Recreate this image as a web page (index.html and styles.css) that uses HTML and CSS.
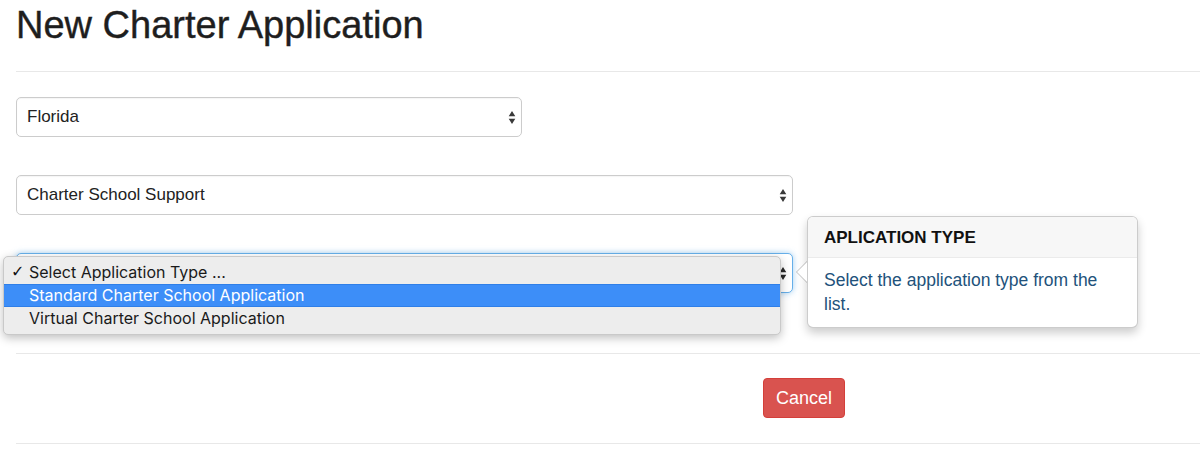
FILE: index.html
```html
<!DOCTYPE html>
<html>
<head>
<meta charset="utf-8">
<link rel="stylesheet" href="styles.css">
</head>
<body>
<div class="page">
  <h1 class="title">New Charter Application</h1>
  <hr class="rule rule-top">
  <div class="form">
    <div class="select select-narrow">
      <span class="select-text">Florida</span>
      <svg class="caret" width="8" height="15" viewBox="0 0 8 15"><path d="M4 1 L7.3 6.3 L0.7 6.3 Z M0.7 8.7 L7.3 8.7 L4 14 Z" fill="#3a3a3a"/></svg>
    </div>
    <div class="select select-wide">
      <span class="select-text">Charter School Support</span>
      <svg class="caret" width="8" height="15" viewBox="0 0 8 15"><path d="M4 1 L7.3 6.3 L0.7 6.3 Z M0.7 8.7 L7.3 8.7 L4 14 Z" fill="#3a3a3a"/></svg>
    </div>
    <div class="field-active">
      <div class="select select-wide select-focus">
        <span class="select-text"></span>
        <svg class="caret" width="8" height="15" viewBox="0 0 8 15"><path d="M4 1 L7.3 6.3 L0.7 6.3 Z M0.7 8.7 L7.3 8.7 L4 14 Z" fill="#2a2a2a"/></svg>
      </div>
      <ul class="menu">
        <li class="menu-item"><span class="check">✓</span>Select Application Type ...</li>
        <li class="menu-item menu-item-hl">Standard Charter School Application</li>
        <li class="menu-item">Virtual Charter School Application</li>
      </ul>
      <div class="popover">
        <div class="popover-arrow"></div>
        <div class="popover-title">APLICATION TYPE</div>
        <div class="popover-body">Select the application type from the list.</div>
      </div>
    </div>
  </div>
  <hr class="rule rule-mid">
  <div class="actions">
    <button class="btn-cancel">Cancel</button>
  </div>
  <hr class="rule rule-bottom">
</div>
</body>
</html>
```

FILE: styles.css
```css
* { box-sizing: border-box; }
html, body { margin: 0; padding: 0; background: #fff; }
body {
  font-family: "Liberation Sans", Arial, sans-serif;
  color: #333;
  font-size: 16px;
}
.page {
  padding: 5px 0 0 16px;
}
.title {
  margin: 0;
  font-size: 38px;
  line-height: 40px;
  font-weight: 400;
  color: #1e1e1e;
  -webkit-text-stroke: 0.4px #1e1e1e;
}
.rule {
  border: 0;
  border-top: 1px solid #e8e8e8;
  margin: 0;
  height: 0;
}
.rule-top { margin-top: 26px; }
.form {
  padding-top: 25px;
  display: flex;
  flex-direction: column;
  gap: 38px;
}
.select {
  position: relative;
  height: 40px;
  border: 1px solid #ccc;
  border-radius: 5px;
  background: #fff;
  display: flex;
  align-items: center;
  padding: 0 5px 0 10px;
  box-shadow: inset 0 1px 1px rgba(0,0,0,.04);
}
.select-narrow { width: 506px; }
.select-wide { width: 777px; }
.select-text {
  flex: 1;
  font-size: 17px;
  color: #222;
}
.caret { display: block; }
.select-focus {
  border-color: #66afe9;
  box-shadow: 0 0 6px rgba(102,175,233,.6);
}
.field-active {
  position: relative;
}
.menu {
  position: absolute;
  left: -13px;
  top: 3px;
  width: 778px;
  height: 79px;
  margin: 0;
  padding: 4px 0 0 0;
  list-style: none;
  background: #ededed;
  border: 1px solid #c9c9c9;
  border-radius: 5px;
  box-shadow: 0 3px 10px rgba(0,0,0,.25);
}
.menu-item {
  position: relative;
  height: 23px;
  line-height: 22px;
  padding-left: 25px;
  font-family: Inter, "Liberation Sans", sans-serif;
  font-size: 16px;
  color: #1a1a1a;
}
.menu-item-hl {
  background: #3d8ef8;
  color: #fff;
  border-top: 1px solid #2f7fe8;
  border-bottom: 1px solid #2f7fe8;
  line-height: 21px;
}
.check {
  position: absolute;
  left: 7px;
  top: 0;
  font-family: "DejaVu Sans", sans-serif;
  font-size: 16px;
  font-weight: 700;
  color: #111;
}
.popover {
  position: absolute;
  left: 791px;
  top: -37px;
  width: 331px;
  height: 112px;
  background: #fff;
  border: 1px solid rgba(0,0,0,.2);
  border-radius: 6px;
  box-shadow: 0 5px 10px rgba(0,0,0,.2);
}
.popover-arrow {
  position: absolute;
  left: -12px;
  top: 44px;
  width: 0;
  height: 0;
  border-top: 11px solid transparent;
  border-bottom: 11px solid transparent;
  border-right: 11px solid rgba(0,0,0,.25);
}
.popover-arrow::after {
  content: "";
  position: absolute;
  left: 1px;
  top: -10px;
  border-top: 10px solid transparent;
  border-bottom: 10px solid transparent;
  border-right: 10px solid #fff;
}
.popover-title {
  height: 41px;
  line-height: 41px;
  padding: 0 16px;
  background: #f7f7f7;
  border-bottom: 1px solid #ebebeb;
  border-radius: 5px 5px 0 0;
  font-weight: 700;
  font-size: 17px;
  color: #111;
}
.popover-body {
  padding: 10px 16px;
  font-size: 17.5px;
  line-height: 24px;
  color: #22527b;
}
.rule-mid { margin-top: 60px; }
.actions {
  padding: 24px 0 25px 747px;
}
.btn-cancel {
  display: block;
  width: 82px;
  height: 40px;
  background: #d9534f;
  border: 1px solid #d43f3a;
  border-radius: 4px;
  color: #fff;
  font-family: "Liberation Sans", Arial, sans-serif;
  font-size: 18px;
  padding: 0;
}
```
